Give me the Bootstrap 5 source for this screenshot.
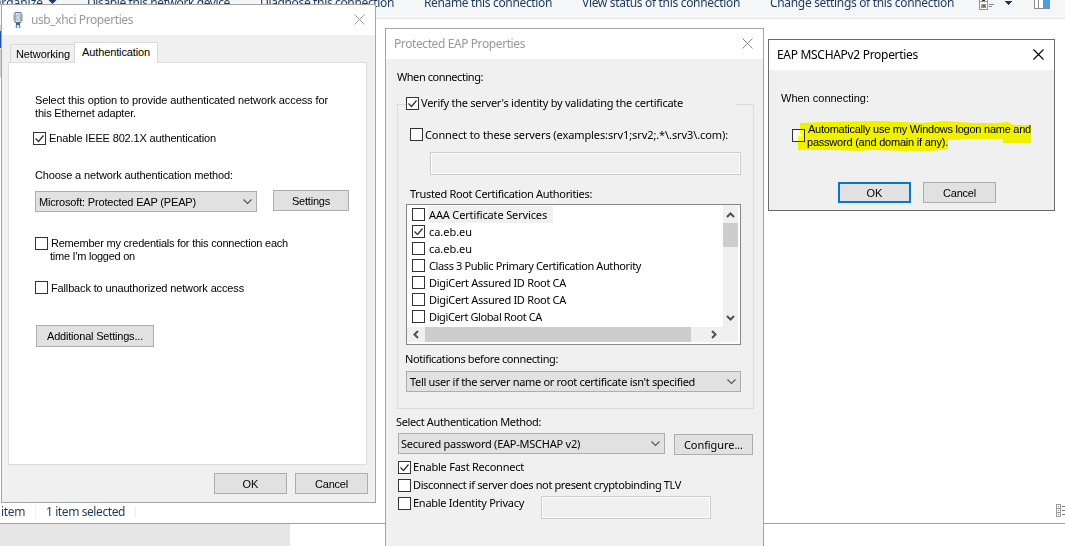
<!DOCTYPE html>
<html lang="en">
<head>
<meta charset="utf-8">
<title>Network connection properties</title>
<link href="https://cdn.jsdelivr.net/npm/bootstrap@5.3.0/dist/css/bootstrap.min.css" rel="stylesheet">
<style>
body{width:1065px;height:546px;overflow:hidden;background:#fff;font-size:11px;line-height:13px;color:#000}
.segoe{font-family:"Noto Sans","Open Sans",sans-serif;font-size:12px;line-height:16px}
.mssans{font-family:"Liberation Sans",sans-serif}
.tahoma{font-family:"Noto Sans","Open Sans",sans-serif}
.t{white-space:nowrap;display:block;flex:none;width:max-content}
/* explorer window behind */
.cmdbar{height:19px;background:#f5f6f7;border-bottom:1px solid #e4e5e6;color:#1e395b}
.cmdbar .t,.cmdbar svg{position:absolute}
.cmdbar .t{top:-5px}
.statusbar{left:0;top:504px;width:1065px;height:20px;padding-bottom:3px;border-bottom:1px solid #a0a0a0;color:#1e395b}
.statusbar i{width:1px;height:12px;background:#eceef2}
.under{left:0;top:524px;width:290px;height:22px;background:#e6e6e6}
/* dialogs */
.win{position:absolute;background:#f0f0f0;border:1px solid #a5a5a5}
.win-title{height:30px;background:#fff;color:#999}
#w1{left:1px;top:4px;width:375px;height:499px}
#w2{left:385px;top:28px;width:379px;height:540px}
#w3{left:768px;top:39px;width:287px;height:172px;border-color:#6b6b6b}
#w3 .win-title{color:#000}
.pb{background:#e1e1e1;border:1px solid #adadad;display:flex;align-items:center;justify-content:center;flex:none;height:21px;width:73px;padding:0;color:#000;font:inherit}
.mssans .pb{padding-top:1px}
.pb.default{border:2px solid #0078d7}
.combo{background:#e1e1e1;border:1px solid #adadad;height:21px;display:flex;align-items:center;justify-content:space-between;padding:0 4px 0 3px;flex:none}
.mssans .combo .t{padding-top:1px}
.cb{width:13px;height:13px;border:1px solid #333;background:#fff;flex:none;display:block}
.cb svg{display:block}
.field{border:1px solid #ccc;background:#f0f0f0;box-shadow:inset 0 0 0 1px #fff;height:23px;flex:none}
.tabs{height:28px;padding-left:8px}
.tab-a{width:64px;height:18px;margin-bottom:1px;border:1px solid #d9d9d9;border-right:0;border-bottom:0;padding:3px 0 0 5px}
.tab-b{width:84px;height:21px;background:#fff;border:1px solid #d9d9d9;border-bottom:0;padding:3px 0 0 7px;position:relative;z-index:1}
.page{margin:-1px 0 0 6px;width:359px;height:403px;background:#fff;border:1px solid #dcdcdc;display:flow-root}
.group{margin:21px 0 0 11px;width:357px;height:305px;border:1px solid #dcdcdc}
.verify{margin:-8px 0 0 8px;width:330px;height:13px;background:#f0f0f0}
.certs{margin:4px 0 0 8px;width:335px;height:141px;border:1px solid #828790;background:#fff}
.items{width:316px;height:122px;padding:1px 0 0 5px}
.items>div{height:17px;padding-top:2px}
.items .t{margin:-2px 0 0 3px;height:17px;line-height:17px;padding-left:1px}
.items .sel{background:#f0f0f0;width:125px}
.vs{width:15px;height:122px;background:#f0f0f0}
.hs{width:331px;height:15px;background:#f0f0f0}
.thumb{background:#cdcdcd}
</style>
</head>
<body class="position-relative">
<div class="cmdbar segoe position-relative">
  <span class="t" style="left:-8px" data-w="51">Organize</span>
  <svg style="left:48px;top:0" width="9" height="5"><path d="M0.5 0h8L4.5 4z" fill="#1e395b"/></svg>
  <span class="t" style="left:87px" data-w="143">Disable this network device</span>
  <span class="t" style="left:260px" data-w="134">Diagnose this connection</span>
  <span class="t" style="left:424px" data-w="128">Rename this connection</span>
  <span class="t" style="left:582px" data-w="158">View status of this connection</span>
  <span class="t" style="left:770px" data-w="184">Change settings of this connection</span>
  <svg style="left:978px;top:0" width="74" height="11" shape-rendering="crispEdges">
    <path d="M1.500 0v9.500h8v-9.500M1.500 1.500h8" fill="#fff" stroke="#929292"/><path d="M4 0h3v1h-3z" fill="#333"/>
    <path d="M3 4h5v4h-5z" fill="#8d9c78"/><path d="M3 4h2v2h-2z" fill="#d79c42"/><path d="M5 5h2v2h-2z" fill="#357493"/>
    <path d="M11 4h5v1h-5zM11 6h3v1h-3z" fill="#888"/>
    <path d="M27 1h7v1h-1v1h-1v1h-1v1h-1v-1h-1v-1h-1v-1h-1z" fill="#1e395b"/>
    <path d="M56.500 0v8.500h15v-8.500M60.500 0v8" fill="#fff" stroke="#8b8b8b"/><path d="M65 0h6v8h-6z" fill="#4c9ee3"/>
  </svg>
</div>
<svg class="position-absolute" style="left:0;top:19px" width="2" height="60"><path d="M0 6h2v6H0zM0 30h2v28H0z" fill="#d0d0d0"/><path d="M0 12h2v17H0z" fill="#1f50b5"/></svg>
<div class="statusbar segoe position-absolute d-flex align-items-center">
  <span class="t" style="margin-left:1px" data-w="24">item</span><i style="margin-left:10px"></i>
  <span class="t" style="margin-left:10px" data-w="79">1 item selected</span><i style="margin-left:10px"></i>
  <svg class="position-absolute" style="left:1056px;top:0" width="9" height="14" shape-rendering="crispEdges"><path d="M.5.500h4v4h-4zM.5 4.500h4v4h-4zM.5 8.500h4v4h-4z" fill="#fff" stroke="#999"/><path d="M6 2h3v1h-3zM6 6h3v1h-3zM6 10h3v1h-3z" fill="#777"/><path d="M2 2h1v1h-1zM2 6h1v1h-1zM2 10h1v1h-1z" fill="#76759b"/></svg>
</div>
<div class="under position-absolute"></div>

<section class="win mssans" id="w1">
  <div class="win-title segoe d-flex align-items-center position-relative">
    <svg style="margin-left:11px" width="10" height="18" viewBox="0 0 10 18"><path d="M2 1.500h6v10H2z" fill="#dce4ed" stroke="#67788e"/><path d="M1 3v7M9 3v7" stroke="#8796a8"/><path d="M4 4h2v5H4z" fill="#fff" stroke="#8793a4" stroke-width=".7"/><path d="M3 12h4v2H3z" fill="#435f78"/><path d="M3.500 14v3M6.500 14v3" stroke="#28a2d6" stroke-width="1.500"/></svg>
    <span class="t" style="margin-left:8px" data-w="102">usb_xhci Properties</span>
    <svg class="position-absolute" style="left:352px;top:9px" width="11" height="11"><path d="M.5.500l10 10M10.500.500l-10 10" stroke="#999"/></svg>
  </div>
  <div class="tabs d-flex align-items-end">
    <div class="tab-a"><span class="t" data-w="54">Networking</span></div>
    <div class="tab-b"><span class="t" data-w="68">Authentication</span></div>
  </div>
  <div class="page">
    <div style="margin:31px 0 0 26px"><span class="t" data-w="293">Select this option to provide authenticated network access for</span><span class="t" data-w="101">this Ethernet adapter.</span></div>
    <div class="d-flex" style="margin:12px 0 0 24px"><span class="cb checked"></span><span class="t" style="margin-left:3px" data-w="167">Enable IEEE 802.1X authentication</span></div>
    <div style="margin:24px 0 0 26px"><span class="t" data-w="198">Choose a network authentication method:</span></div>
    <div class="d-flex" style="margin:8px 0 0 26px;height:22px">
      <div class="combo" style="width:222px;margin-top:1px"><span class="t" data-w="157">Microsoft: Protected EAP (PEAP)</span></div>
      <button class="pb" style="width:76px;margin-left:16px"><span class="t" data-w="38">Settings</span></button>
    </div>
    <div class="d-flex" style="margin:25px 0 0 26px"><span class="cb"></span><div style="margin-left:3px"><span class="t" data-w="237">Remember my credentials for this connection each</span><span class="t" data-w="85" style="margin-left:-1px">time I'm logged on</span></div></div>
    <div class="d-flex" style="margin:18px 0 0 26px;height:13px"><span class="cb"></span><span class="t" style="margin:1px 0 0 3px" data-w="193">Fallback to unauthorized network access</span></div>
    <button class="pb" style="margin:31px 0 0 27px;width:118px;height:22px"><span class="t" data-w="96">Additional Settings...</span></button>
  </div>
  <div class="d-flex" style="margin:8px 0 0 212px;gap:8px"><button class="pb"><span class="t" data-w="16">OK</span></button><button class="pb"><span class="t" data-w="33">Cancel</span></button></div>
</section>

<section class="win tahoma" id="w2">
  <div class="win-title segoe d-flex align-items-center position-relative">
    <span class="t" style="margin-left:8px" data-w="131">Protected EAP Properties</span>
    <svg class="position-absolute" style="left:356px;top:9px" width="11" height="11"><path d="M.5.500l10 10M10.500.500l-10 10" stroke="#888"/></svg>
  </div>
  <span class="t" style="margin:11px 0 0 11px" data-w="86">When connecting:</span>
  <div class="group">
    <div class="verify d-flex"><span class="cb checked"></span><span class="t" style="margin:-1px 0 0 2px" data-w="262">Verify the server's identity by validating the certificate</span></div>
    <div class="d-flex" style="margin:18px 0 0 12px"><span class="cb"></span><span class="t" style="margin-left:2px" data-w="303">Connect to these servers (examples:srv1;srv2;.*\.srv3\.com):</span></div>
    <div class="field" style="margin:11px 0 0 32px;width:311px"></div>
    <span class="t" style="margin:12px 0 0 12px" data-w="182">Trusted Root Certification Authorities:</span>
    <div class="certs">
      <div class="d-flex">
        <div class="items">
          <div class="d-flex"><span class="cb"></span><span class="t sel" data-w="118">AAA Certificate Services</span></div>
          <div class="d-flex"><span class="cb checked"></span><span class="t" data-w="43">ca.eb.eu</span></div>
          <div class="d-flex"><span class="cb"></span><span class="t" data-w="43">ca.eb.eu</span></div>
          <div class="d-flex"><span class="cb"></span><span class="t" data-w="212">Class 3 Public Primary Certification Authority</span></div>
          <div class="d-flex"><span class="cb"></span><span class="t" data-w="137">DigiCert Assured ID Root CA</span></div>
          <div class="d-flex"><span class="cb"></span><span class="t" data-w="137">DigiCert Assured ID Root CA</span></div>
          <div class="d-flex"><span class="cb"></span><span class="t" data-w="113">DigiCert Global Root CA</span></div>
        </div>
        <div class="vs d-flex flex-column justify-content-between">
          <div><svg class="d-block" width="15" height="18"><path d="M4 12l3.500-3.500L11 12" fill="none" stroke="#505050" stroke-width="2"/></svg><div class="thumb" style="height:24px"></div></div>
          <svg class="d-block" width="15" height="18"><path d="M4 7l3.500 3.500L11 7" fill="none" stroke="#505050" stroke-width="2"/></svg>
        </div>
      </div>
      <div class="hs d-flex">
        <svg width="18" height="15"><path d="M11 4L7.500 7.500 11 11" fill="none" stroke="#505050" stroke-width="2"/></svg>
        <div class="thumb" style="width:266px"></div>
        <svg width="32" height="15"><path d="M21 4l3.500 3.500L21 11" fill="none" stroke="#505050" stroke-width="2"/></svg>
      </div>
    </div>
    <span class="t" style="margin:7px 0 0 7px" data-w="153">Notifications before connecting:</span>
    <div class="combo" style="margin:6px 0 0 8px;width:335px"><span class="t" data-w="285">Tell user if the server name or root certificate isn't specified</span></div>
  </div>
  <span class="t" style="margin:6px 0 0 10px" data-w="145">Select Authentication Method:</span>
  <div class="d-flex" style="margin:5px 0 0 12px;height:22px">
    <div class="combo" style="width:267px;padding-left:2px"><span class="t" data-w="179">Secured password (EAP-MSCHAP v2)</span></div>
    <button class="pb" style="width:79px;margin:1px 0 0 9px"><span class="t" data-w="59">Configure...</span></button>
  </div>
  <div class="d-flex" style="margin:6px 0 0 12px;height:13px"><span class="cb checked"></span><span class="t" style="margin:-1px 0 0 2px" data-w="111">Enable Fast Reconnect</span></div>
  <div class="d-flex" style="margin:5px 0 0 12px;height:13px"><span class="cb"></span><span class="t" style="margin:-1px 0 0 2px" data-w="268">Disconnect if server does not present cryptobinding TLV</span></div>
  <div class="d-flex" style="margin:4px 0 0 12px;height:23px"><span class="cb" style="margin-top:1px"></span><div style="width:128px;margin-left:2px"><span class="t" data-w="111">Enable Identity Privacy</span></div><div class="field" style="width:170px"></div></div>
</section>

<section class="win mssans" id="w3">
  <div class="win-title segoe d-flex align-items-center position-relative">
    <span class="t" style="margin-left:8px" data-w="141">EAP MSCHAPv2 Properties</span>
    <svg class="position-absolute" style="left:264px;top:9px" width="11" height="11"><path d="M.5.500l10 10M10.500.500l-10 10" stroke="#000" stroke-width="1.100"/></svg>
  </div>
  <span class="t" style="margin:22px 0 0 12px" data-w="88">When connecting:</span>
  <div class="d-flex position-relative" style="margin:18px 0 0 23px">
    <span class="cb" style="margin-top:6px"></span>
    <!-- highlighter stroke over the option -->
    <svg class="position-absolute" style="left:0;top:-3px;mix-blend-mode:multiply" width="244" height="34"><path d="M8 3L30 2 90 1 130 3 153 1 180 3 205 3 216 2 222 5H239V23H211V19H183L156 20V29L140 31 113 31 80 30 66 31 40 30H6V16H10V13H8Z" fill="#ffff00"/></svg>
    <div class="position-relative" style="margin-left:3px"><span class="t" data-w="223">Automatically use my Windows logon name and</span><span class="t" data-w="141" style="margin-left:-1px">password (and domain if any).</span></div>
  </div>
  <div class="d-flex" style="margin:33px 0 0 69px;gap:12px"><button class="pb default"><span class="t" data-w="16">OK</span></button><button class="pb"><span class="t" data-w="33">Cancel</span></button></div>
</section>

<script src="https://cdn.jsdelivr.net/npm/bootstrap@5.3.0/dist/js/bootstrap.bundle.min.js"></script>
<script>
// glyphs shared by check boxes and drop-downs
document.querySelectorAll('.checked').forEach(e => e.innerHTML = '<svg width="11" height="11"><path d="M1.500 5.500l3 3 5-6" fill="none" stroke="#333" stroke-width="1.300"/></svg>');
document.querySelectorAll('.combo').forEach(e => e.insertAdjacentHTML('beforeend', '<svg width="9" height="6"><path d="M.5.500l4 4 4-4" fill="none" stroke="#555" stroke-width="1.100"/></svg>'));
document.querySelectorAll('[data-w]').forEach(e => {
  const r = document.createRange(); r.selectNodeContents(e);
  const d = (e.dataset.w - r.getBoundingClientRect().width) / e.textContent.length;
  e.style.letterSpacing = d.toFixed(3) + 'px';
});
</script>
</body>
</html>
